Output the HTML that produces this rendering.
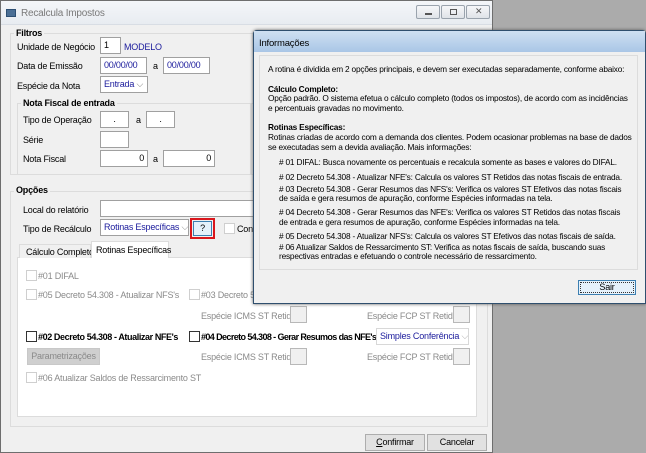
<!DOCTYPE html>
<html><head><meta charset="utf-8"><style>
*{box-sizing:border-box;margin:0;padding:0}
body{width:646px;height:453px;background:#ababab;font-family:"Liberation Sans",sans-serif;font-size:9px;letter-spacing:-0.2px;color:#000;position:relative;overflow:hidden}
.a{position:absolute;white-space:nowrap}
.win{position:absolute;left:0;top:0;width:493px;height:453px;background:#f0f0f0;border:1px solid #6e6e6e}
.tb{position:absolute;left:0;top:0;width:491px;height:24px;background:linear-gradient(#f4f6f9,#e8ecf1);border-bottom:1px solid #d8dde4}
.grp{position:absolute;border:1px solid #dcdcdc}
.inp{position:absolute;background:#fff;border:1px solid #a0a0a0;height:17px;line-height:15px;padding:0 3px;white-space:nowrap;overflow:hidden}
.lbl{position:absolute;white-space:nowrap;line-height:12px}
.cb{position:absolute;width:11px;height:11px;border:1px solid #333;background:#fff}
.cbd{border-color:#cfcfcf}
.gray{color:#8a8a8a}
.box{position:absolute;width:17px;height:17px;border:1px solid #b8b8b8;background:#f0f0f0}
.btn{position:absolute;border:1px solid #adadad;background:#e1e1e1;text-align:center;line-height:15px;height:17px;white-space:nowrap}
.wb{position:absolute;top:4px;width:24px;height:14px;border:1px solid #9aa3ad;border-radius:2px;background:linear-gradient(#f6f7f9,#dfe3e8)}
.dt div{position:absolute;white-space:nowrap}
</style></head><body>
<div class="win">
 <div class="tb">
  <div class="a" style="left:5px;top:8px;width:10px;height:8px;background:#4b6f95;border:1px solid #2d4f73"></div>
  <div class="a" style="left:20px;top:7px;font-size:10px;color:#7a7a7a">Recalcula Impostos</div>
  <div class="wb" style="left:415px"><div class="a" style="left:8px;top:7px;width:7px;height:2px;background:#555"></div></div>
  <div class="wb" style="left:440px"><div class="a" style="left:8px;top:3px;width:7px;height:6px;border:1px solid #555"></div></div>
  <div class="wb" style="left:465px"><div class="a" style="left:8px;top:0px;font-size:9px;color:#555">✕</div></div>
 </div>
 <div class="grp" style="left:9px;top:32px;width:478px;height:142px"></div>
 <div class="lbl" style="left:13px;top:26px;font-weight:bold;background:#f0f0f0;padding:0 2px">Filtros</div>
 <div class="lbl" style="left:16px;top:40px">Unidade de Negócio</div>
 <div class="inp" style="left:99px;top:36px;width:21px">1</div>
 <div class="lbl" style="left:123px;top:40px;color:#1b1b9c">MODELO</div>
 <div class="lbl" style="left:16px;top:59px">Data de Emissão</div>
 <div class="inp" style="left:99px;top:56px;width:47px;color:#1b1b9c">00/00/00</div>
 <div class="lbl" style="left:152px;top:59px">a</div>
 <div class="inp" style="left:162px;top:56px;width:47px;color:#1b1b9c">00/00/00</div>
 <div class="lbl" style="left:16px;top:79px">Espécie da Nota</div>
 <div class="inp" style="left:99px;top:75px;width:48px;color:#1b1b9c">Entrada <span style="color:#777">⌵</span></div>
 <div class="grp" style="left:16px;top:102px;width:234px;height:72px"></div>
 <div class="grp" style="left:250px;top:102px;width:230px;height:72px"></div>
 <div class="lbl" style="left:20px;top:96px;font-weight:bold;background:#f0f0f0;padding:0 2px">Nota Fiscal de entrada</div>
 <div class="lbl" style="left:22px;top:113px">Tipo de Operação</div>
 <div class="inp" style="left:99px;top:110px;width:29px;text-align:center">.</div>
 <div class="lbl" style="left:135px;top:113px">a</div>
 <div class="inp" style="left:145px;top:110px;width:29px;text-align:center">.</div>
 <div class="lbl" style="left:22px;top:133px">Série</div>
 <div class="inp" style="left:99px;top:130px;width:29px"></div>
 <div class="lbl" style="left:22px;top:152px">Nota Fiscal</div>
 <div class="inp" style="left:99px;top:149px;width:48px;text-align:right">0</div>
 <div class="lbl" style="left:152px;top:152px">a</div>
 <div class="inp" style="left:162px;top:149px;width:52px;text-align:right">0</div>
 <div class="grp" style="left:9px;top:190px;width:478px;height:236px"></div>
 <div class="lbl" style="left:13px;top:183px;font-weight:bold;background:#f0f0f0;padding:0 2px">Opções</div>
 <div class="lbl" style="left:22px;top:203px">Local do relatório</div>
 <div class="inp" style="left:99px;top:199px;width:380px"></div>
 <div class="lbl" style="left:22px;top:222px">Tipo de Recálculo</div>
 <div class="inp" style="left:99px;top:218px;width:89px;color:#1b1b9c">Rotinas Específicas <span style="color:#888">⌵</span></div>
 <div class="a" style="left:189px;top:217px;width:25px;height:21px;border:2px solid #d9161c"></div>
 <div class="btn" style="left:192px;top:220px;width:19px;height:15px;line-height:13px;border-color:#3c7fb1;background:#e5f1fb">?</div>
 <div class="cb cbd" style="left:223px;top:222px"></div>
 <div class="lbl" style="left:236px;top:222px">Consi</div>
 <div class="a" style="left:16px;top:256px;width:460px;height:160px;background:#fff;border:1px solid #dcdcdc"></div>
 <div class="a" style="left:18px;top:243px;width:72px;height:14px;border:1px solid #dcdcdc;border-bottom:none;background:#f0f0f0"></div>
 <div class="lbl" style="left:25px;top:245px">Cálculo Completo</div>
 <div class="a" style="left:90px;top:240px;width:78px;height:17px;border:1px solid #dcdcdc;border-bottom:none;background:#fff"></div>
 <div class="lbl" style="left:95px;top:243px">Rotinas Específicas</div>
 <div class="cb cbd" style="left:25px;top:269px"></div><div class="lbl gray" style="left:37px;top:269px">#01 DIFAL</div>
 <div class="cb cbd" style="left:25px;top:288px"></div><div class="lbl gray" style="left:37px;top:288px">#05 Decreto 54.308 - Atualizar NFS's</div>
 <div class="cb cbd" style="left:188px;top:288px"></div><div class="lbl gray" style="left:200px;top:288px">#03 Decreto 54.308</div>
 <div class="lbl gray" style="left:200px;top:309px">Espécie ICMS ST Retido</div><div class="box" style="left:289px;top:305px"></div>
 <div class="lbl gray" style="left:366px;top:309px">Espécie FCP ST Retido</div><div class="box" style="left:452px;top:305px"></div>
 <div class="cb" style="left:25px;top:330px"></div><div class="lbl" style="left:37px;top:330px;letter-spacing:-.4px;font-weight:bold">#02 Decreto 54.308 - Atualizar NFE's</div>
 <div class="cb" style="left:188px;top:330px"></div><div class="lbl" style="left:200px;top:330px;font-weight:bold;letter-spacing:-.6px">#04 Decreto 54.308 - Gerar Resumos das NFE's</div>
 <div class="inp" style="left:375px;top:327px;width:93px;border-color:#d8d8d8;color:#1b1b9c">Simples Conferência <span style="color:#aaa">⌵</span></div>
 <div class="btn" style="left:26px;top:347px;width:73px;color:#8a8a8a;background:#cfcfcf;border-color:#c8c8c8">Parametrizações</div>
 <div class="lbl gray" style="left:200px;top:350px">Espécie ICMS ST Retido</div><div class="box" style="left:289px;top:347px"></div>
 <div class="lbl gray" style="left:366px;top:350px">Espécie FCP ST Retido</div><div class="box" style="left:452px;top:347px"></div>
 <div class="cb cbd" style="left:25px;top:371px"></div><div class="lbl gray" style="left:37px;top:371px">#06 Atualizar Saldos de Ressarcimento ST</div>
 <div class="btn" style="left:364px;top:433px;width:60px"><u>C</u>onfirmar</div>
 <div class="btn" style="left:426px;top:433px;width:60px">Cancelar</div>
</div>
<div class="a" style="left:253px;top:30px;width:393px;height:274px;background:#f0f0f0;border:1px solid #2f4f6e;border-radius:4px 4px 0 0;box-shadow:0 0 3px #555">
 <div class="a" style="left:0;top:0;width:391px;height:21px;background:linear-gradient(#cfe0f2,#a9c6e6)"></div>
 <div class="a" style="left:5px;top:7px;font-size:9.5px">Informações</div>
 <div class="a" style="left:5px;top:24px;width:379px;height:215px;border:1px solid #dcdcdc"></div>
 <div class="a dt" style="left:14px;top:33px;font-size:8.3px;letter-spacing:-0.2px;line-height:10px;width:372px;height:200px">
  <div style="top:0">A rotina é dividida em 2 opções principais, e devem ser executadas separadamente, conforme abaixo:</div>
  <div style="top:20px;font-weight:bold">Cálculo Completo:</div>
  <div style="top:29px">Opção padrão. O sistema efetua o cálculo completo (todos os impostos), de acordo com as incidências</div>
  <div style="top:39px">e percentuais gravadas no movimento.</div>
  <div style="top:58px;font-weight:bold">Rotinas Específicas:</div>
  <div style="top:68px">Rotinas criadas de acordo com a demanda dos clientes. Podem ocasionar problemas na base de dados</div>
  <div style="top:78px">se executadas sem a devida avaliação. Mais informações:</div>
  <div style="left:11px;top:93px"># 01 DIFAL: Busca novamente os percentuais e recalcula somente as bases e valores do DIFAL.</div>
  <div style="left:11px;top:108px"># 02 Decreto 54.308 - Atualizar NFE's: Calcula os valores ST Retidos das notas fiscais de entrada.</div>
  <div style="left:11px;top:120px"># 03 Decreto 54.308 - Gerar Resumos das NFS's: Verifica os valores ST Efetivos das notas fiscais</div>
  <div style="left:11px;top:129px">de saída e gera resumos de apuração, conforme Espécies informadas na tela.</div>
  <div style="left:11px;top:143px"># 04 Decreto 54.308 - Gerar Resumos das NFE's: Verifica os valores ST Retidos das notas fiscais</div>
  <div style="left:11px;top:153px">de entrada e gera resumos de apuração, conforme Espécies informadas na tela.</div>
  <div style="left:11px;top:167px"># 05 Decreto 54.308 - Atualizar NFS's: Calcula os valores ST Efetivos das notas fiscais de saída.</div>
  <div style="left:11px;top:178px"># 06 Atualizar Saldos de Ressarcimento ST: Verifica as notas fiscais de saída, buscando suas</div>
  <div style="left:11px;top:187px">respectivas entradas e efetuando o controle necessário de ressarcimento.</div>
 </div>
 <div class="btn" style="left:324px;top:249px;width:58px;height:15px;line-height:13px;border:1px solid #3c7fb1;outline:1px dotted #333;outline-offset:-3px;background:#e5f1fb">Sair</div>
</div>
</body></html>
